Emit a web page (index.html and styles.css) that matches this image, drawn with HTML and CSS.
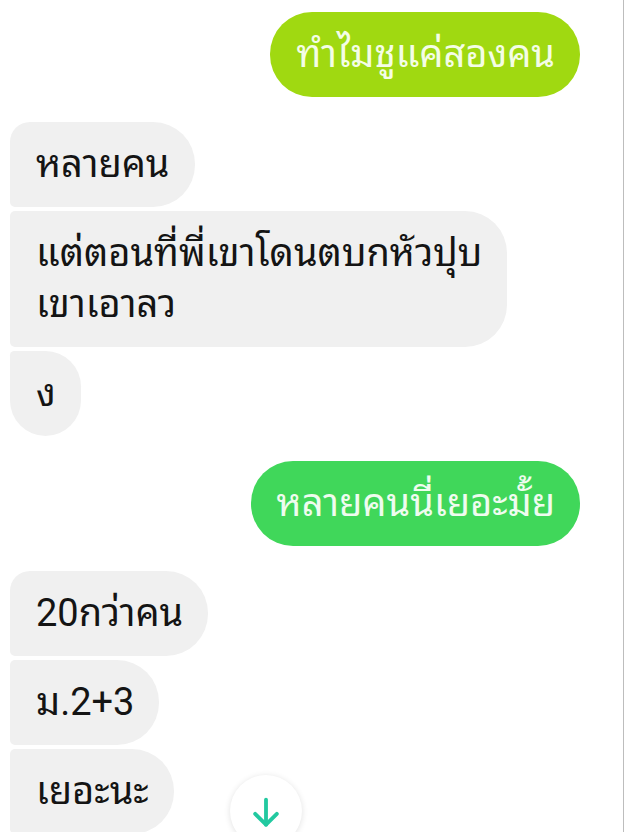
FILE: index.html
```html
<!DOCTYPE html>
<html lang="th">
<head>
<meta charset="utf-8">
<link rel="stylesheet" href="styles.css">
</head>
<body>
<div class="chat">
  <div class="group sent">
    <div class="bubble lime">ทำไมชูแค่สองคน</div>
  </div>
  <div class="group recv">
    <div class="bubble gray first">หลายคน</div>
    <div class="bubble gray mid">แต่ตอนที่พี่เขาโดนตบกหัวปุบ<br>เขาเอาลว</div>
    <div class="bubble gray last">ง</div>
  </div>
  <div class="group sent">
    <div class="bubble green">หลายคนนี่เยอะมั้ย</div>
  </div>
  <div class="group recv">
    <div class="bubble gray first">20กว่าคน</div>
    <div class="bubble gray mid">ม.2+3</div>
    <div class="bubble gray mid">เยอะนะ</div>
  </div>
</div>
<div class="scroll-btn">
  <svg width="40" height="40" viewBox="0 0 24 24" fill="none" stroke="#22c9a0" stroke-width="2.3" stroke-linecap="round" stroke-linejoin="round">
    <path d="M12 4v15"/>
    <path d="M5.5 12.5l6.5 6.5 6.5-6.5"/>
  </svg>
</div>
</body>
</html>
```
FILE: styles.css
```css
html, body {
  margin: 0;
  padding: 0;
  background: #fff;
  height: 832px;
  overflow: hidden;
}
body {
  position: relative;
  font-family: Roboto, "Noto Sans Thai Looped", "Noto Looped Thai", "Loma", "Garuda", "Tlwg Typo", "Sarabun", "Noto Sans Thai", sans-serif;
  border-right: 1px solid #bdbdbd;
  box-sizing: border-box;
  width: 624px;
}
.chat {
  display: flex;
  flex-direction: column;
  gap: 25px;
  padding: 12px 43px 0 10px;
}
.group {
  display: flex;
  flex-direction: column;
  gap: 4px;
}
.sent { align-items: flex-end; }
.recv { align-items: flex-start; }
.bubble {
  font-size: 38px;
  line-height: 51px;
  padding: 17px 25px 17px 26px;
  border-radius: 42px;
}
.lime {
  background: #a0d911;
  color: #f4fde6;
}
.green {
  background: #40d75a;
  color: #effcef;
}
.gray {
  background: #f0f0f0;
  color: #141414;
}
.gray.first { border-radius: 20px 42px 42px 5px; }
.gray.mid { border-radius: 5px 42px 42px 5px; }
.gray.last { border-radius: 5px 42px 42px 42px; }
.scroll-btn {
  position: absolute;
  left: 230px;
  top: 775px;
  width: 72px;
  height: 72px;
  border-radius: 50%;
  background: #fff;
  box-shadow: 0 1px 6px rgba(0,0,0,0.12);
  display: flex;
  justify-content: center;
  padding-top: 18px;
  box-sizing: border-box;
}
```
